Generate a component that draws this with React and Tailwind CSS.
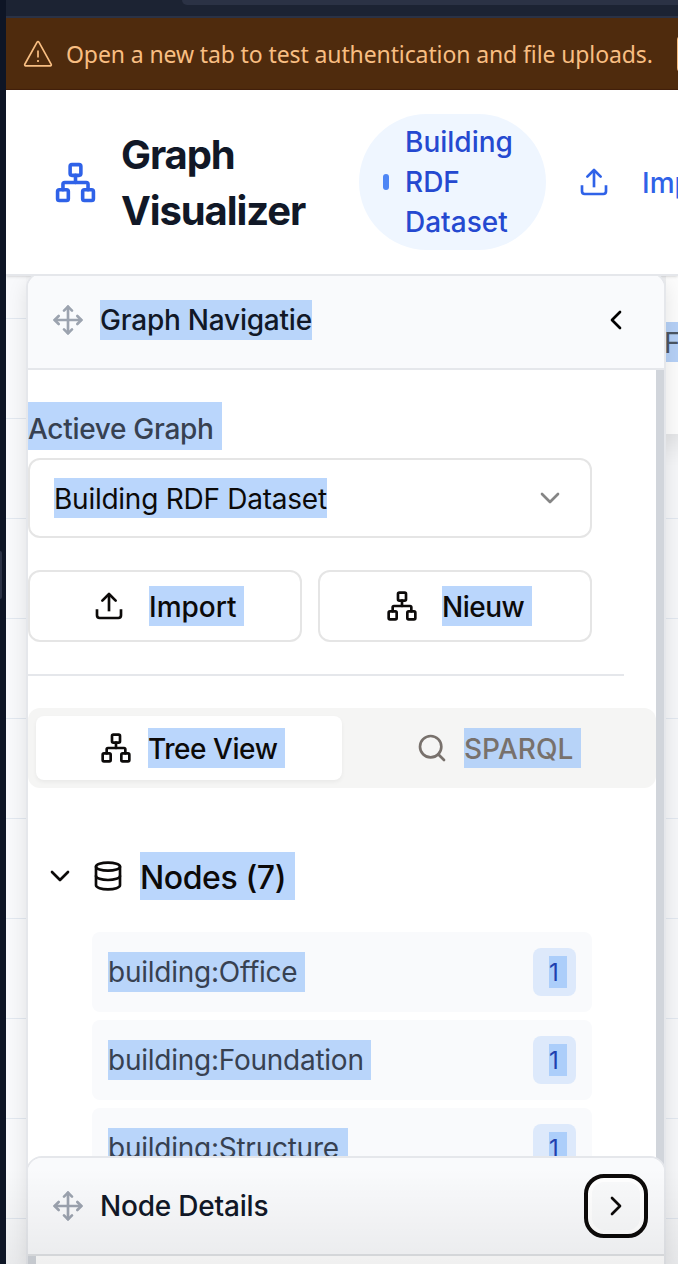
import React from "react";
import { ChevronDown, ChevronLeft, ChevronRight, Database, Move, Network, Search } from "lucide-react";

function UploadIcon({ className }) {
  return (
    <svg className={className} viewBox="0 0 24 24" fill="none" stroke="currentColor" strokeWidth="2" strokeLinecap="butt" strokeLinejoin="round">
      <path d="M3 14.5V19a2 2 0 0 0 2 2h14a2 2 0 0 0 2-2v-4.5" />
      <path d="M17 8l-5-5-5 5" strokeLinecap="round" />
      <path d="M12 3v13" />
    </svg>
  );
}

function WarningIcon() {
  return (
    <svg className="h-8 w-8 shrink-0" viewBox="0 0 32 32" fill="none" stroke="currentColor" strokeWidth="1.7" strokeLinejoin="round">
      <path d="M15.1 4.2a1 1 0 0 1 1.8 0l12.3 22.1a1 1 0 0 1-.9 1.5H3.7a1 1 0 0 1-.9-1.5z" />
      <path d="M16 12.5v7M16 22v2" />
    </svg>
  );
}

function Row({ name, width }) {
  return (
    <div className="flex h-20 items-center justify-between rounded-lg bg-[#f9fafc] px-4 text-[#374151]">
      <span className={"h-10 whitespace-nowrap bg-[#b9d5fa] leading-[41px] tracking-[-0.25px] " + width}>{name}</span>
      <span className="flex h-12 w-[43px] items-center rounded-lg bg-[#dde9fb] pl-4 text-2xl leading-[34px] text-[#1e40af]">
        <span className="h-8 w-[18px] bg-[#accefa]">1</span>
      </span>
    </div>
  );
}

function GridLines() {
  return (
    <div className="flex flex-col pt-[42px]">
      {[0, 1, 2, 3, 4, 5, 6, 7, 8, 9].map((i) => (
        <div key={i} className="h-[100px] shrink-0 border-t border-[#e2e8f0]" />
      ))}
    </div>
  );
}

function NavigationPanel() {
  return (
    <section className="relative z-10 -mt-1 h-[992px] w-[640px] shrink-0 overflow-hidden rounded-t-2xl border-2 border-[#e5e7eb] bg-white shadow-[0_8px_20px_rgba(0,0,0,0.1)]">
      <div className="flex h-24 items-center border-b-2 border-[#e5e7eb] bg-[#f9fafc] pb-0.5 pl-6 pr-8">
        <Move className="h-8 w-8 text-[#9ca3af]" strokeWidth={2} />
        <h2 className="ml-4 h-10 w-[212px] whitespace-nowrap bg-[#b9d5fa] font-medium leading-[41px] tracking-[-0.22px] text-[#111827]">Graph Navigatie</h2>
        <ChevronLeft className="ml-auto h-8 w-8 text-black" />
      </div>
      <div className="flex">
        <div className="w-[628px] shrink-0 pt-8">
          <div className="h-12 w-[194px] whitespace-nowrap bg-[#bad6fc] pt-1.5 font-medium leading-[42px] tracking-[-0.3px] text-[#374151]">Actieve Graph</div>
          <div className="mt-2 flex h-20 w-[564px] items-center justify-between rounded-xl border-2 border-[#e5e5e5] px-6">
            <span className="h-10 w-[273px] whitespace-nowrap bg-[#bad6fc] leading-[42px] tracking-[-0.25px]">Building RDF Dataset</span>
            <ChevronDown className="h-8 w-8 text-[#858585]" />
          </div>
          <div className="mt-8 flex gap-4 font-medium">
            <div className="flex h-[72px] w-[274px] items-center rounded-xl border-2 border-[#e5e5e5] pl-[63px]">
              <UploadIcon className="h-8 w-8" />
              <span className="ml-6 h-10 w-[95px] bg-[#bad6fc] leading-[42px]">Import</span>
            </div>
            <div className="flex h-[72px] w-[274px] items-center rounded-xl border-2 border-[#e5e5e5] pl-[66px]">
              <Network className="h-8 w-8" />
              <span className="ml-6 h-10 w-[90px] bg-[#bad6fc] leading-[42px] tracking-[-0.5px]">Nieuw</span>
            </div>
          </div>
          <div className="mt-8 h-0.5 w-[596px] bg-[#e5e7eb]" />
          <div className="mt-8 flex h-20 rounded-xl bg-[#f5f5f4] p-2 font-medium">
            <div className="flex h-16 w-[306px] items-center rounded-lg bg-white pl-16 shadow-[0_2px_4px_rgba(0,0,0,0.05)]">
              <Network className="h-8 w-8" />
              <span className="ml-4 h-10 w-[137px] whitespace-nowrap bg-[#bad6fc] leading-[42px] tracking-[-0.45px]">Tree View</span>
            </div>
            <div className="flex h-16 flex-1 items-center pl-[74px] text-[#78716c]">
              <Search className="h-8 w-8" />
              <span className="ml-4 h-10 w-[117px] bg-[#b7d3f8] leading-[42px]">SPARQL</span>
            </div>
          </div>
          <div className="mt-16 flex h-12 items-center pl-4">
            <ChevronDown className="h-8 w-8" />
            <Database className="ml-4 h-8 w-8" />
            <h3 className="ml-4 h-12 w-[155px] whitespace-nowrap bg-[#bad6fc] text-[32px] font-medium leading-[51px] tracking-[-0.4px]">Nodes (7)</h3>
          </div>
          <div className="ml-16 mt-8 flex w-[500px] flex-col gap-2">
            <Row name="building:Office" width="w-[197px]" />
            <Row name="building:Foundation" width="w-[263px]" />
            <Row name="building:Structure" width="w-[240px]" />
          </div>
        </div>
        <div className="w-2 bg-[#d1d5db]" />
      </div>
    </section>
  );
}

function DetailsPanel() {
  return (
    <section className="absolute left-5 top-[880px] z-20 h-[160px] w-[640px] overflow-hidden rounded-t-2xl border-2 border-[#e5e7eb] bg-white">
      <div className="flex h-[98px] items-center border-b-2 border-[#e0e2e5] bg-[#f9fafc] pl-6 pr-4">
        <Move className="h-8 w-8 text-[#9ca3af]" />
        <h2 className="ml-4 font-medium leading-10 tracking-[-0.2px] text-[#111827]">Node Details</h2>
        <div className="ml-auto flex h-16 w-16 items-center justify-center rounded-[20px] border-4 border-[#0c0a09] bg-white">
          <div className="flex h-12 w-12 items-center justify-center rounded-xl bg-[#f9fafb]">
            <ChevronRight className="h-8 w-8" />
          </div>
        </div>
      </div>
      <div className="h-2 w-2 bg-[#d1d5db]" />
    </section>
  );
}

export default function App() {
  return (
    <div className="flex h-[1264px] w-[678px] overflow-hidden bg-[#0e1525] font-['Inter',sans-serif] text-[28px] text-[#0c0a09]">
      <div className="w-1.5 shrink-0 pt-[551px]">
        <div className="h-12 w-0.5 rounded-r-sm bg-[#2b3245]" />
      </div>
      <div className="flex w-[672px] shrink-0 flex-col overflow-hidden">
        <div className="h-[18px] shrink-0 border-b-2 border-[#2b3245] bg-[#1c2333] pl-[176px]">
          <div className="h-[5px] rounded-bl-lg bg-[#2b3245]" />
        </div>
        <div className="flex h-[72px] shrink-0 items-center border-b border-[#43200c] bg-[#4f2b0d] pl-4 font-['Noto_Sans',sans-serif] text-[23px] tracking-[-0.11px] text-[#f8be82]">
          <WarningIcon />
          <span className="ml-3 w-[611px] shrink-0 whitespace-nowrap pt-0.5">Open a new tab to test authentication and file uploads.</span>
          <div className="h-9 w-8 shrink-0 rounded border-2 border-[#f8be82]" />
        </div>
        <header className="relative z-10 flex h-[186px] shrink-0 items-center border-b-2 border-[#e5e7eb] bg-white pl-12 shadow-sm">
          <Network className="h-[43px] w-[43px] shrink-0 text-[#2f62e8]" />
          <h1 className="ml-6 w-[238px] shrink-0 pt-0.5 text-[40px] font-bold leading-[56px] tracking-[-1.1px] text-[#111827]">Graph<br />Visualizer</h1>
          <div className="flex h-[136px] w-[187px] shrink-0 items-center rounded-[68px] bg-[#eff6ff] pl-6 font-medium leading-10 text-[#2549d0]">
            <div className="mr-4 h-4 w-1.5 rounded-full bg-[#4e86f5]" />
            <span>Building<br />RDF<br />Dataset</span>
          </div>
          <UploadIcon className="ml-8 h-8 w-8 shrink-0 text-[#2f62e8]" />
          <span className="ml-8 shrink-0 pt-px font-medium text-[#2f62e8]">Import</span>
        </header>
        <main className="relative flex h-[988px] shrink-0 overflow-hidden bg-[#f5f6f8]">
          <div className="w-5 shrink-0 bg-[#f8f9fb]">
            <GridLines />
          </div>
          <NavigationPanel />
          <div className="relative w-3 shrink-0 bg-[#f6f7f9]">
            <GridLines />
            <div className="absolute inset-x-0 top-0 h-[158px] bg-[#fcfcfc] pt-[46px] shadow-[0_10px_30px_rgba(0,0,0,0.3)]">
              <div className="h-10 overflow-hidden bg-[#b5d0f6] leading-[42px] text-[#4b5563]">
                <span className="-ml-0.5 block">F</span>
              </div>
            </div>
          </div>
          <DetailsPanel />
          <div className="absolute inset-x-0 bottom-0 z-30 h-24 bg-gradient-to-b from-transparent to-black/[0.06]" />
        </main>
      </div>
    </div>
  );
}
